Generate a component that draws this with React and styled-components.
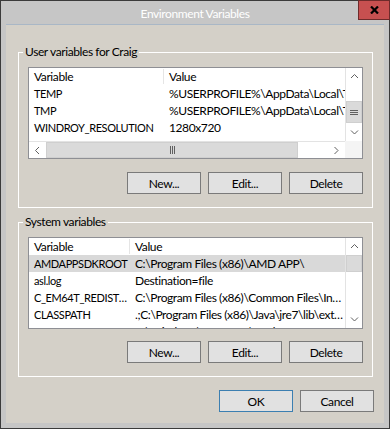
import styled, { createGlobalStyle } from "styled-components";

const GlobalStyle = createGlobalStyle`
  html, body {
    margin: 0;
    padding: 0;
    background: #fff;
  }
  body {
    font-family: Lato, "Liberation Sans", sans-serif;
    font-size: 12px;
    letter-spacing: -0.4px;
    color: #000;
  }
  * {
    box-sizing: border-box;
  }
`;

const Window = styled.div`
  position: relative;
  width: 390px;
  height: 429px;
  border: 1px solid #3b3b3b;
  background: #c6c6c6;
  display: flex;
  flex-direction: column;
  padding: 0 5px 5px;
`;

const TitleBar = styled.div`
  height: 23px;
  flex: none;
  display: flex;
  align-items: center;
  justify-content: center;
  padding-top: 2px;
  color: #fff;
  font-size: 12px;
`;

const CloseButton = styled.div`
  position: absolute;
  top: -1px;
  right: -1px;
  width: 32px;
  height: 20px;
  background: #c75050;
  border: 1px solid #6e2b2b;
  display: flex;
  align-items: center;
  justify-content: center;
`;

const Client = styled.div`
  flex: 1;
  background: #d4d0c8;
  border-top: 1px solid #a9b7c6;
  display: flex;
  flex-direction: column;
  padding: 19px 10px 0 12px;
`;

const GroupBox = styled.fieldset`
  margin: ${(p) => p.$top}px 1px 0 0;
  padding: 7px 9px 13px;
  border: 1px solid #fff;
  min-width: 0;
`;

const Legend = styled.legend`
  padding: 0 2px;
  margin-left: -5px;
  line-height: 16px;
  font-size: 12px;
`;

const ListView = styled.div`
  width: 335px;
  height: 92px;
  border: 1px solid #8e8f94;
  background: #fff;
  display: grid;
  grid-template-columns: 1fr 17px;
  grid-template-rows: ${(p) => (p.$hscroll ? "1fr 17px" : "1fr")};
  overflow: hidden;
`;

const Viewport = styled.div`
  grid-row: 1;
  grid-column: 1;
  overflow: hidden;
  min-width: 0;
`;

const Row = styled.div`
  display: flex;
  height: 17px;
  align-items: center;
  white-space: nowrap;
  background: ${(p) => (p.$selected ? "#d9d9d9" : "transparent")};
`;

const Cell = styled.div`
  flex: none;
  width: ${(p) => p.$w}px;
  padding: 0 0 0 5px;
  font-size: ${(p) => (p.$name ? "11px" : "12px")};
  overflow: hidden;
  text-overflow: ${(p) => (p.$ellipsis ? "ellipsis" : "clip")};
  white-space: nowrap;
  border-right: 1px solid ${(p) => (p.$header ? "#e5e5e5" : "transparent")};
`;

const VScroll = styled.div`
  grid-row: 1;
  grid-column: 2;
  display: flex;
  flex-direction: column;
  background: #fff;
  border-left: 1px solid #e3e3e3;
`;

const HScroll = styled.div`
  grid-row: 2;
  grid-column: 1;
  display: flex;
  background: #fff;
  border-top: 1px solid #e3e3e3;
`;

const Corner = styled.div`
  grid-row: 2;
  grid-column: 2;
  background: #f4f4f4;
`;

const Arrow = styled.div`
  flex: none;
  width: ${(p) => (p.$vertical ? "100%" : "17px")};
  height: ${(p) => (p.$vertical ? "17px" : "100%")};
  display: flex;
  align-items: center;
  justify-content: center;
`;

const Track = styled.div`
  flex: 1;
  display: flex;
  flex-direction: ${(p) => (p.$vertical ? "column" : "row")};
`;

const Thumb = styled.div`
  flex: none;
  background: #dadada;
  border: 1px solid #cfcfcf;
  display: flex;
  align-items: center;
  justify-content: center;
  ${(p) =>
    p.$vertical
      ? `height: ${p.$size}px; margin-top: ${p.$offset}px;`
      : `width: ${p.$size}px; margin-left: ${p.$offset}px;`}
`;

const ButtonRow = styled.div`
  display: flex;
  justify-content: flex-end;
  gap: 7px;
  margin-top: ${(p) => p.$top}px;
`;

const Button = styled.button`
  width: 74px;
  height: 22px;
  padding: 0;
  background: #e1e1e1;
  border: 1px solid ${(p) => (p.$default ? "#3c7fb1" : "#7a7a7a")};
  font: inherit;
  letter-spacing: inherit;
  color: #000;
`;

const chevrons = {
  up: "1,5 4.5,1.5 8,5",
  down: "1,1.5 4.5,5 8,1.5",
  left: "5,1 1.5,4.5 5,8",
  right: "1.5,1 5,4.5 1.5,8",
};

function Chevron({ dir }) {
  const vertical = dir === "up" || dir === "down";
  return (
    <svg width={vertical ? 9 : 7} height={vertical ? 7 : 9} viewBox={vertical ? "0 0 9 7" : "0 0 7 9"}>
      <polyline points={chevrons[dir]} fill="none" stroke="#606060" strokeWidth="1" />
    </svg>
  );
}

function Grip({ vertical }) {
  return vertical ? (
    <svg width="8" height="7" viewBox="0 0 8 7">
      <path d="M0 1.5h8M0 3.5h8M0 5.5h8" stroke="#606060" strokeWidth="1" />
    </svg>
  ) : (
    <svg width="7" height="8" viewBox="0 0 7 8">
      <path d="M1.5 0v8M3.5 0v8M5.5 0v8" stroke="#606060" strokeWidth="1" />
    </svg>
  );
}

function VerticalBar({ thumb, offset }) {
  return (
    <VScroll>
      <Arrow $vertical>
        <Chevron dir="up" />
      </Arrow>
      <Track $vertical>
        <Thumb $vertical $size={thumb} $offset={offset}>
          {thumb > 20 && <Grip vertical />}
        </Thumb>
      </Track>
      <Arrow $vertical>
        <Chevron dir="down" />
      </Arrow>
    </VScroll>
  );
}

function VariableList({ rows, columns, hscroll, ellipsis, thumb, offset }) {
  return (
    <ListView $hscroll={hscroll}>
      <Viewport>
        <Row>
          <Cell $w={columns[0]} $header>
            Variable
          </Cell>
          <Cell $w={columns[1]}>Value</Cell>
        </Row>
        {rows.map(([name, value], i) => (
          <Row key={name} $selected={i === 0 && !hscroll}>
            <Cell $w={columns[0]} $name $ellipsis={ellipsis}>
              {name}
            </Cell>
            <Cell $w={columns[1]} $ellipsis={ellipsis}>
              {value}
            </Cell>
          </Row>
        ))}
      </Viewport>
      <VerticalBar thumb={thumb} offset={offset} />
      {hscroll && (
        <>
          <HScroll>
            <Arrow>
              <Chevron dir="left" />
            </Arrow>
            <Track>
              <Thumb $size={252} $offset={0}>
                <Grip />
              </Thumb>
            </Track>
            <Arrow>
              <Chevron dir="right" />
            </Arrow>
          </HScroll>
          <Corner />
        </>
      )}
    </ListView>
  );
}

const userVars = [
  ["TEMP", "%USERPROFILE%\\AppData\\Local\\Temp"],
  ["TMP", "%USERPROFILE%\\AppData\\Local\\Temp"],
  ["WINDROY_RESOLUTION", "1280x720"],
];

const systemVars = [
  ["AMDAPPSDKROOT", "C:\\Program Files (x86)\\AMD APP\\"],
  ["asl.log", "Destination=file"],
  ["C_EM64T_REDIST11", "C:\\Program Files (x86)\\Common Files\\Intel\\Shared Libraries\\"],
  ["CLASSPATH", ".;C:\\Program Files (x86)\\Java\\jre7\\lib\\ext\\QTJava.zip"],
  ["ComSpec", "C:\\Windows\\system32\\cmd.exe"],
];

function EditButtons({ top }) {
  return (
    <ButtonRow $top={top}>
      <Button>New...</Button>
      <Button>Edit...</Button>
      <Button>Delete</Button>
    </ButtonRow>
  );
}

export default function App() {
  return (
    <>
      <GlobalStyle />
      <Window>
        <TitleBar>Environment Variables</TitleBar>
        <CloseButton>
          <svg width="9" height="8" viewBox="0 0 9 8">
            <path d="M1 0.5l7 7M8 0.5l-7 7" stroke="#000" strokeWidth="2.2" />
          </svg>
        </CloseButton>
        <Client>
          <GroupBox $top={0}>
            <Legend>User variables for Craig</Legend>
            <VariableList rows={userVars} columns={[135, 420]} hscroll thumb={22} offset={16} />
            <EditButtons top={13} />
          </GroupBox>
          <GroupBox $top={6}>
            <Legend>System variables</Legend>
            <VariableList rows={systemVars} columns={[101, 214]} ellipsis thumb={17} offset={0} />
            <EditButtons top={12} />
          </GroupBox>
          <ButtonRow $top={13}>
            <Button $default>OK</Button>
            <Button>Cancel</Button>
          </ButtonRow>
        </Client>
      </Window>
    </>
  );
}
